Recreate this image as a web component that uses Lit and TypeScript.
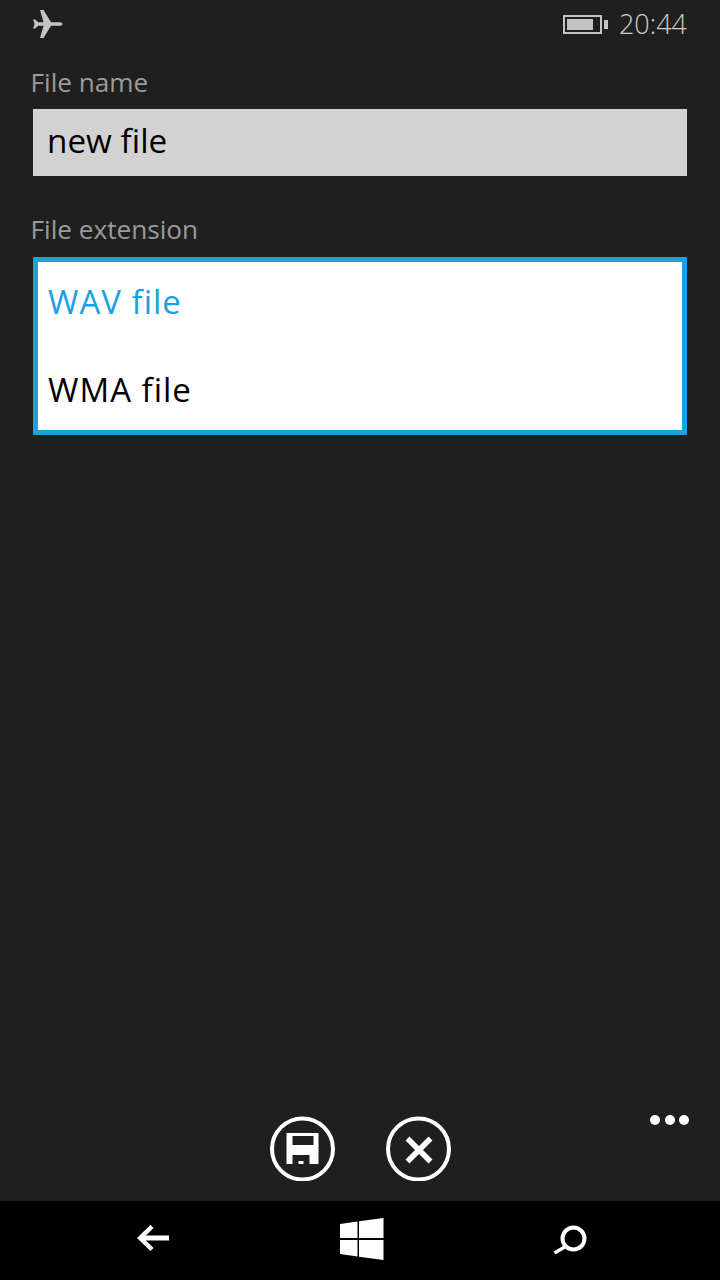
import { LitElement, html, css } from 'lit';
import { customElement } from 'lit/decorators.js';

@customElement('app-root')
export class AppRoot extends LitElement {
  static styles = css`
    :host {
      display: flex;
      flex-direction: column;
      width: 720px;
      height: 1280px;
      background: #1f1f1f;
      font-family: 'Open Sans', 'Noto Sans', sans-serif;
      overflow: hidden;
    }
    svg {
      display: block;
    }
    .status {
      display: flex;
      align-items: center;
      height: 48px;
      padding: 0 33px;
      color: #cfcfcf;
    }
    .battery {
      margin-left: auto;
    }
    .time {
      margin-left: 11px;
      font-size: 27px;
      font-weight: 300;
      line-height: 44px;
    }
    .form {
      display: flex;
      flex-direction: column;
      flex: 1;
      padding: 0 33px;
    }
    .label {
      margin-left: -2.5px;
      height: 61px;
      font-size: 26.2px;
      line-height: 68px;
      color: #9b9b9b;
    }
    .input {
      height: 67px;
      padding-left: 14px;
      background: #d2d2d2;
      color: #000;
      font-size: 33.3px;
      line-height: 63px;
    }
    .label.second {
      margin-top: 20px;
      line-height: 66px;
    }
    .list {
      display: flex;
      flex-direction: column;
      gap: 8px;
      height: 178px;
      box-sizing: border-box;
      border: 5px solid #1ba1e2;
      background: #fff;
    }
    .option {
      height: 80px;
      padding-left: 10px;
      font-size: 33px;
      letter-spacing: 1px;
      line-height: 80px;
      color: #000;
    }
    .option.selected {
      color: #1ba1e2;
    }
    .appbar {
      display: grid;
      grid-template-columns: 1fr auto 1fr;
      height: 91px;
    }
    .actions {
      display: flex;
      gap: 51px;
      grid-column: 2;
      padding-top: 6px;
    }
    .more {
      display: flex;
      justify-content: flex-end;
      gap: 4.5px;
      padding: 5px 31px 0 0;
    }
    .dot {
      width: 10px;
      height: 10px;
      border-radius: 50%;
      background: #fff;
    }
    .nav {
      display: grid;
      grid-template-columns: repeat(3, 208px);
      justify-content: center;
      align-items: center;
      height: 75px;
      padding: 0 0 4px 4px;
      background: #000;
    }
    .nav svg {
      justify-self: center;
    }
  `;

  render() {
    return html`
      <div class="status">
        <svg width="30" height="28" viewBox="0 0 30 28" fill="#c4c4c4">
          <path
            d="M29.5 14c0-1-1-1.8-3-1.8H18L10.5 0H7l3.6 12.2H5.2L2.2 9.6H0l1.6 4.4L0 18.4h2.2l3-2.6h5.4L7 28h3.5L18 15.8h8.5c2 0 3-.8 3-1.8z"
          />
        </svg>
        <svg class="battery" width="45" height="19" viewBox="0 0 45 19">
          <rect x="1" y="1" width="37" height="17" fill="none" stroke="#c4c4c4" stroke-width="2" />
          <rect x="4" y="4" width="26" height="11" fill="#c4c4c4" />
          <rect x="41" y="5" width="4" height="9" fill="#c4c4c4" />
        </svg>
        <span class="time">20:44</span>
      </div>
      <div class="form">
        <div class="label">File name</div>
        <div class="input">new file</div>
        <div class="label second">File extension</div>
        <div class="list">
          <div class="option selected">WAV file</div>
          <div class="option">WMA file</div>
        </div>
      </div>
      <div class="appbar">
        <div class="actions">
          <svg width="65" height="65" viewBox="0 0 65 65">
            <circle cx="32.5" cy="33" r="30.5" fill="none" stroke="#fff" stroke-width="4" />
            <path
              fill="#fff"
              fill-rule="evenodd"
              d="M16.5 17h32v31h-32zM22.5 20v9h21v-9zM22.5 39v9h6v-3h5v3h6v-9z"
            />
          </svg>
          <svg width="65" height="65" viewBox="0 0 65 65">
            <circle cx="32.5" cy="33" r="30.5" fill="none" stroke="#fff" stroke-width="4" />
            <path d="M21.5 22.5l23 23M44.5 22.5l-23 23" fill="none" stroke="#fff" stroke-width="5.5" />
          </svg>
        </div>
        <div class="more">
          <span class="dot"></span><span class="dot"></span><span class="dot"></span>
        </div>
      </div>
      <div class="nav">
        <svg width="34" height="28" viewBox="0 0 34 28">
          <path d="M32 13H4" fill="none" stroke="#fff" stroke-width="5" />
          <path d="M15 1.5L3.2 13L15 24.5" fill="none" stroke="#fff" stroke-width="4.5" />
        </svg>
        <svg width="44" height="42" viewBox="0 0 44 42" fill="#fff">
          <path d="M0 6l17.5-2.5V20H0zM19 3.3L43.5 0v20H19zM0 22h17.5v16.5L0 36zM19 22h24.5v20L19 38.7z" />
        </svg>
        <svg width="34" height="30" viewBox="0 0 34 30">
          <circle cx="20.5" cy="14.5" r="11" fill="none" stroke="#fff" stroke-width="4" />
          <path d="M12.5 22.5L1.5 29" fill="none" stroke="#fff" stroke-width="3.5" />
        </svg>
      </div>
    `;
  }
}
